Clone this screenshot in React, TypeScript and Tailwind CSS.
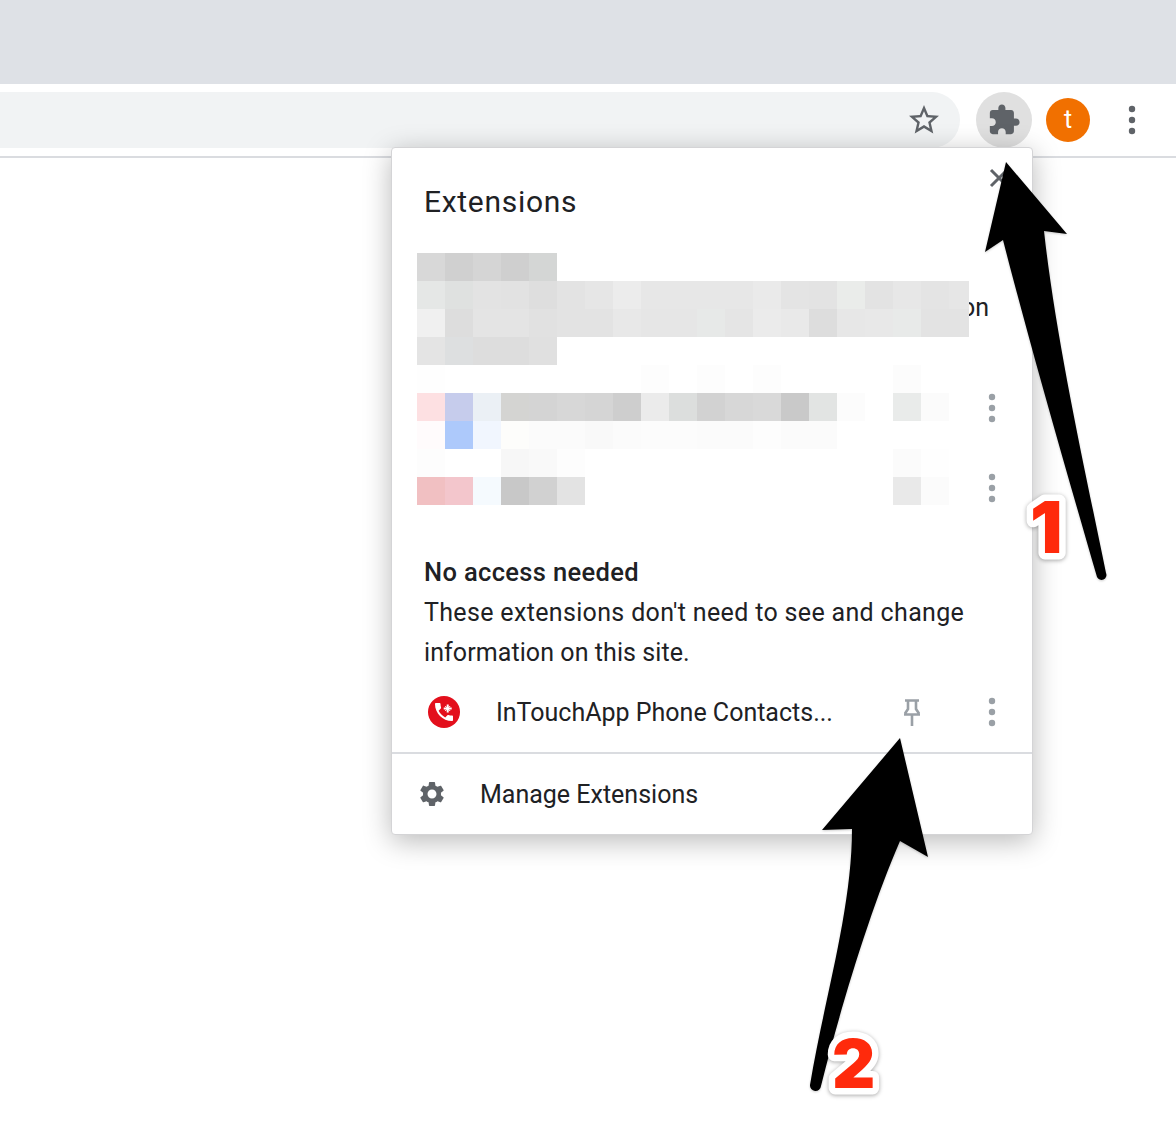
const font = "font-['Roboto','Liberation_Sans',sans-serif]";

const rows: string[][] = [
  ["#d8d8d8", "#d0d0d0", "#d5d5d5", "#cfcfcf", "#d4d6d5"],
  ["#e5e7e6", "#dfe1e0", "#e3e3e3", "#e2e2e2", "#dedede", "#e3e3e3", "#e6e6e6", "#ececec", "#e7e7e7", "#e7e7e7", "#e7e7e7", "#e7e7e7", "#eaeaea", "#e4e4e4", "#e3e3e3", "#eaecea", "#e3e3e3", "#e7e7e7", "#e4e4e4", "#e6e6e6"],
  ["#f0f0f0", "#dddddd", "#e4e4e4", "#e4e4e4", "#e1e1e1", "#e3e3e3", "#e3e3e3", "#e8e8e8", "#e6e6e6", "#e6e6e6", "#e7e9e8", "#e5e5e5", "#ebebeb", "#e9e9e9", "#dddddd", "#e7e7e7", "#e8e8e8", "#e8eae9", "#e3e3e3", "#e3e3e3"],
  ["#e4e4e4", "#dddfe0", "#dddddd", "#dddddd", "#e0e0e0"],
  ["#fefefe", "#ffffff", "#ffffff", "#ffffff", "#ffffff", "#ffffff", "#ffffff", "#ffffff", "#fdfdfd", "#ffffff", "#fdfdfd", "#ffffff", "#fdfdfd", "#ffffff", "#ffffff", "#ffffff", "#ffffff", "#fcfcfc", "#ffffff"],
  ["#fde0e2", "#c6ccec", "#ebf0f5", "#d4d4d2", "#d4d4d4", "#d7d7d7", "#d5d5d5", "#cecece", "#ebebeb", "#dcdedd", "#d2d2d2", "#d7d7d7", "#d9d9d9", "#c9c9c9", "#e2e4e3", "#fcfcfc", "#ffffff", "#e9ebea", "#fbfbfb"],
  ["#fffbfc", "#adc9fb", "#f1f6fe", "#fdfdfb", "#fbfbfb", "#fbfbfb", "#f9f9f9", "#fbfbfb", "#fcfcfc", "#fcfcfc", "#fbfbfb", "#fbfbfb", "#fdfdfd", "#fbfbfb", "#fbfbfb", "#ffffff", "#ffffff", "#ffffff", "#ffffff"],
  ["#fdfdfd", "#ffffff", "#ffffff", "#f7f7f7", "#f9f9f9", "#fdfdfd", "#ffffff", "#ffffff", "#ffffff", "#ffffff", "#ffffff", "#ffffff", "#ffffff", "#ffffff", "#ffffff", "#ffffff", "#ffffff", "#fbfbfb", "#fefefe"],
  ["#f1c0c2", "#f3c6cc", "#f5fafe", "#c8c8c8", "#d1d1d1", "#e3e3e3", "#ffffff", "#ffffff", "#ffffff", "#ffffff", "#ffffff", "#ffffff", "#ffffff", "#ffffff", "#ffffff", "#ffffff", "#ffffff", "#e9e9e9", "#fbfbfb"],
];

function Kebab({ className }: { className: string }) {
  return (
    <svg width="8" height="32" viewBox="0 0 8 32" className={className} fill="currentColor">
      <circle cx="4" cy="5" r="3.2" />
      <circle cx="4" cy="16" r="3.2" />
      <circle cx="4" cy="27" r="3.2" />
    </svg>
  );
}

function Mosaic() {
  return (
    <svg width="560" height="256" viewBox="0 0 560 256" className="absolute left-[25px] top-[105px]">
      {rows.map((r, y) =>
        r.map((c, x) => (
          <rect key={`${x}-${y}`} x={x * 28} y={y * 28} width={x === 19 ? 20 : 28} height="28" fill={c} />
        )),
      )}
    </svg>
  );
}

export default function App() {
  return (
    <div className={`relative h-[1123px] w-[1176px] overflow-hidden bg-white ${font}`}>
      <div className="h-[84px] bg-[#dee1e6]" />
      <div className="flex h-[74px] items-start border-b-2 border-[#dadce0] bg-white pt-2">
        <div className="flex h-14 w-[960px] items-center justify-end rounded-r-full bg-[#f1f3f4] pr-[18px]">
          <svg width="36" height="36" viewBox="0 0 24 24" fill="#5f6368">
            <path d="M22 9.24l-7.19-.62L12 2 9.19 8.63 2 9.24l5.46 4.73L5.82 21 12 17.27 18.18 21l-1.63-7.03L22 9.24zM12 15.4l-3.76 2.27 1-4.28-3.32-2.88 4.38-.38L12 6.1l1.71 4.04 4.38.38-3.32 2.88 1 4.28L12 15.4z" />
          </svg>
        </div>
        <div className="ml-4 flex h-14 w-14 items-center justify-center rounded-full bg-[#e0e0e0]">
          <svg width="34" height="34" viewBox="0 0 24 24" fill="#5f6368">
            <path d="M20.5 11H19V7c0-1.1-.9-2-2-2h-4V3.5C13 2.12 11.88 1 10.5 1S8 2.12 8 3.5V5H4c-1.1 0-1.99.9-1.99 2v3.8H3.5c1.49 0 2.7 1.21 2.7 2.7s-1.21 2.7-2.7 2.7H2V20c0 1.1.9 2 2 2h3.8v-1.5c0-1.49 1.21-2.7 2.7-2.7 1.49 0 2.7 1.21 2.7 2.7V22H17c1.1 0 2-.9 2-2v-4h1.5c1.38 0 2.5-1.12 2.5-2.5S21.88 11 20.5 11z" />
          </svg>
        </div>
        <div className="ml-[14px] mt-[6px] flex h-11 w-11 items-center justify-center rounded-full bg-[#f17000] text-[25px] text-white">
          t
        </div>
        <Kebab className="ml-[38px] mt-3 text-[#5f6368]" />
      </div>

      <div className="absolute left-[391px] top-[147px] flex h-[688px] w-[642px] flex-col rounded border border-[#d4d4d6] bg-white text-[25px] text-[#202124] shadow-[0_6px_28px_rgba(0,0,0,0.28)]">
        <div className="flex h-[106px] shrink-0 items-center pl-8 text-[30px] tracking-[0.7px]">Extensions</div>
        <svg width="24" height="24" viewBox="0 0 24 24" className="absolute left-[595px] top-[18px]" stroke="#5f6368" strokeWidth="3" fill="none">
          <path d="M4 4l16 16M20 4L4 20" />
        </svg>
        <div className="flex h-[106px] shrink-0 items-center justify-end pb-[2px] pr-[43px] pt-1">on</div>
        <div className="mt-2 flex h-20 shrink-0 items-center justify-end pr-9">
          <Kebab className="text-[#9aa0a6]" />
        </div>
        <div className="flex h-20 shrink-0 items-center justify-end pr-9">
          <Kebab className="text-[#9aa0a6]" />
        </div>
        <div className="mt-[25px] shrink-0 pl-8 leading-10">
          <div className="-mt-px text-[25.5px] font-medium tracking-[0.35px]">No access needed</div>
          <div className="mt-px tracking-[0.34px]">These extensions don't need to see and change</div>
          <div className="tracking-[0.08px]">information on this site.</div>
        </div>
        <div className="flex h-[81px] shrink-0 items-center border-b-2 border-[#dadce0] pl-9 pr-9">
          <svg width="32" height="32" viewBox="0 0 32 32" className="-mt-px shrink-0">
            <circle cx="16" cy="16" r="16" fill="#e30f1c" />
            <g fill="#ffffff" transform="translate(4 4)">
              <path d="M6.62 10.79c1.44 2.83 3.76 5.14 6.59 6.59l2.2-2.2c.27-.27.67-.36 1.02-.24 1.12.37 2.33.57 3.57.57.55 0 1 .45 1 1V20c0 .55-.45 1-1 1-9.39 0-17-7.61-17-17 0-.55.45-1 1-1h3.5c.55 0 1 .45 1 1 0 1.25.2 2.45.57 3.57.11.35.03.74-.25 1.02l-2.2 2.2z" />
            </g>
            <path d="M19.7 8.5v8M15.7 12.5h8" stroke="#ffffff" strokeWidth="2" />
            <path d="M17.2 10l5 5M22.2 10l-5 5" stroke="#ffffff" strokeWidth="1" />
          </svg>
          <div className="ml-9 flex-1">InTouchApp Phone Contacts...</div>
          <svg width="24" height="28" viewBox="0 0 24 28" className="mr-[64px] mt-px shrink-0" stroke="#9aa0a6" strokeWidth="2.6" fill="none">
            <path d="M5 1.5H19M8 2V10L5 14.5M16 2V10L19 14.5M4 15.5H20M12 15V27" />
          </svg>
          <Kebab className="-mt-px shrink-0 text-[#9aa0a6]" />
        </div>
        <div className="flex flex-1 items-center pl-[25px]">
          <svg width="30" height="30" viewBox="0 0 24 24" fill="#5f6368" className="shrink-0">
            <path d="M19.14 12.94c.04-.3.06-.61.06-.94 0-.32-.02-.64-.07-.94l2.03-1.58c.18-.14.23-.41.12-.61l-1.92-3.32c-.12-.22-.37-.29-.59-.22l-2.39.96c-.5-.38-1.03-.7-1.62-.94l-.36-2.54c-.04-.24-.24-.41-.48-.41h-3.84c-.24 0-.43.17-.47.41l-.36 2.54c-.59.24-1.13.57-1.62.94l-2.39-.96c-.22-.08-.47 0-.59.22L2.74 8.87c-.12.21-.08.47.12.61l2.03 1.58c-.05.3-.09.63-.09.94s.02.64.07.94l-2.03 1.58c-.18.14-.23.41-.12.61l1.92 3.32c.12.22.37.29.59.22l2.39-.96c.5.38 1.03.7 1.62.94l.36 2.54c.05.24.24.41.48.41h3.84c.24 0 .44-.17.47-.41l.36-2.54c.59-.24 1.13-.56 1.62-.94l2.39.96c.22.08.47 0 .59-.22l1.92-3.32c.12-.22.07-.47-.12-.61l-2.01-1.58zM12 15.6c-1.98 0-3.6-1.62-3.6-3.6s1.62-3.6 3.6-3.6 3.6 1.62 3.6 3.6-1.62 3.6-3.6 3.6z" />
          </svg>
          <div className="ml-[33px] mt-[2px]">Manage Extensions</div>
        </div>
        <Mosaic />
      </div>

      <svg width="1176" height="1123" viewBox="0 0 1176 1123" className="absolute left-0 top-0 drop-shadow-[0_1px_1px_rgba(0,0,0,0.2)]">
        <path d="M1006 162L1067 234L1044 231C1056 340 1085 470 1106 573A4.5 4.5 0 0 1 1097 577C1066 470 1030 345 1003 240L985 252Z" fill="#000" />
        <path d="M900 738L928 857L900 841C870 910 840 1010 821 1086A5.5 5.5 0 0 1 810 1085C824 1000 852 910 852 829L822 830Z" fill="#000" />
      </svg>

      <svg width="1176" height="1123" viewBox="0 0 1176 1123" className="absolute left-0 top-0 drop-shadow-[0_1px_2px_rgba(0,0,0,0.35)]">
        <text x="1030" y="553" fontSize="72" fontWeight="900" fontFamily="Inter, sans-serif" fill="#ff2a0c" stroke="#ffffff" strokeWidth="13" strokeLinejoin="round" paintOrder="stroke fill">1</text>
        <text x="832" y="1088" fontSize="67" fontWeight="900" fontFamily="Inter, sans-serif" fill="#ff2a0c" stroke="#ffffff" strokeWidth="13" strokeLinejoin="round" paintOrder="stroke fill">2</text>
      </svg>
    </div>
  );
}
